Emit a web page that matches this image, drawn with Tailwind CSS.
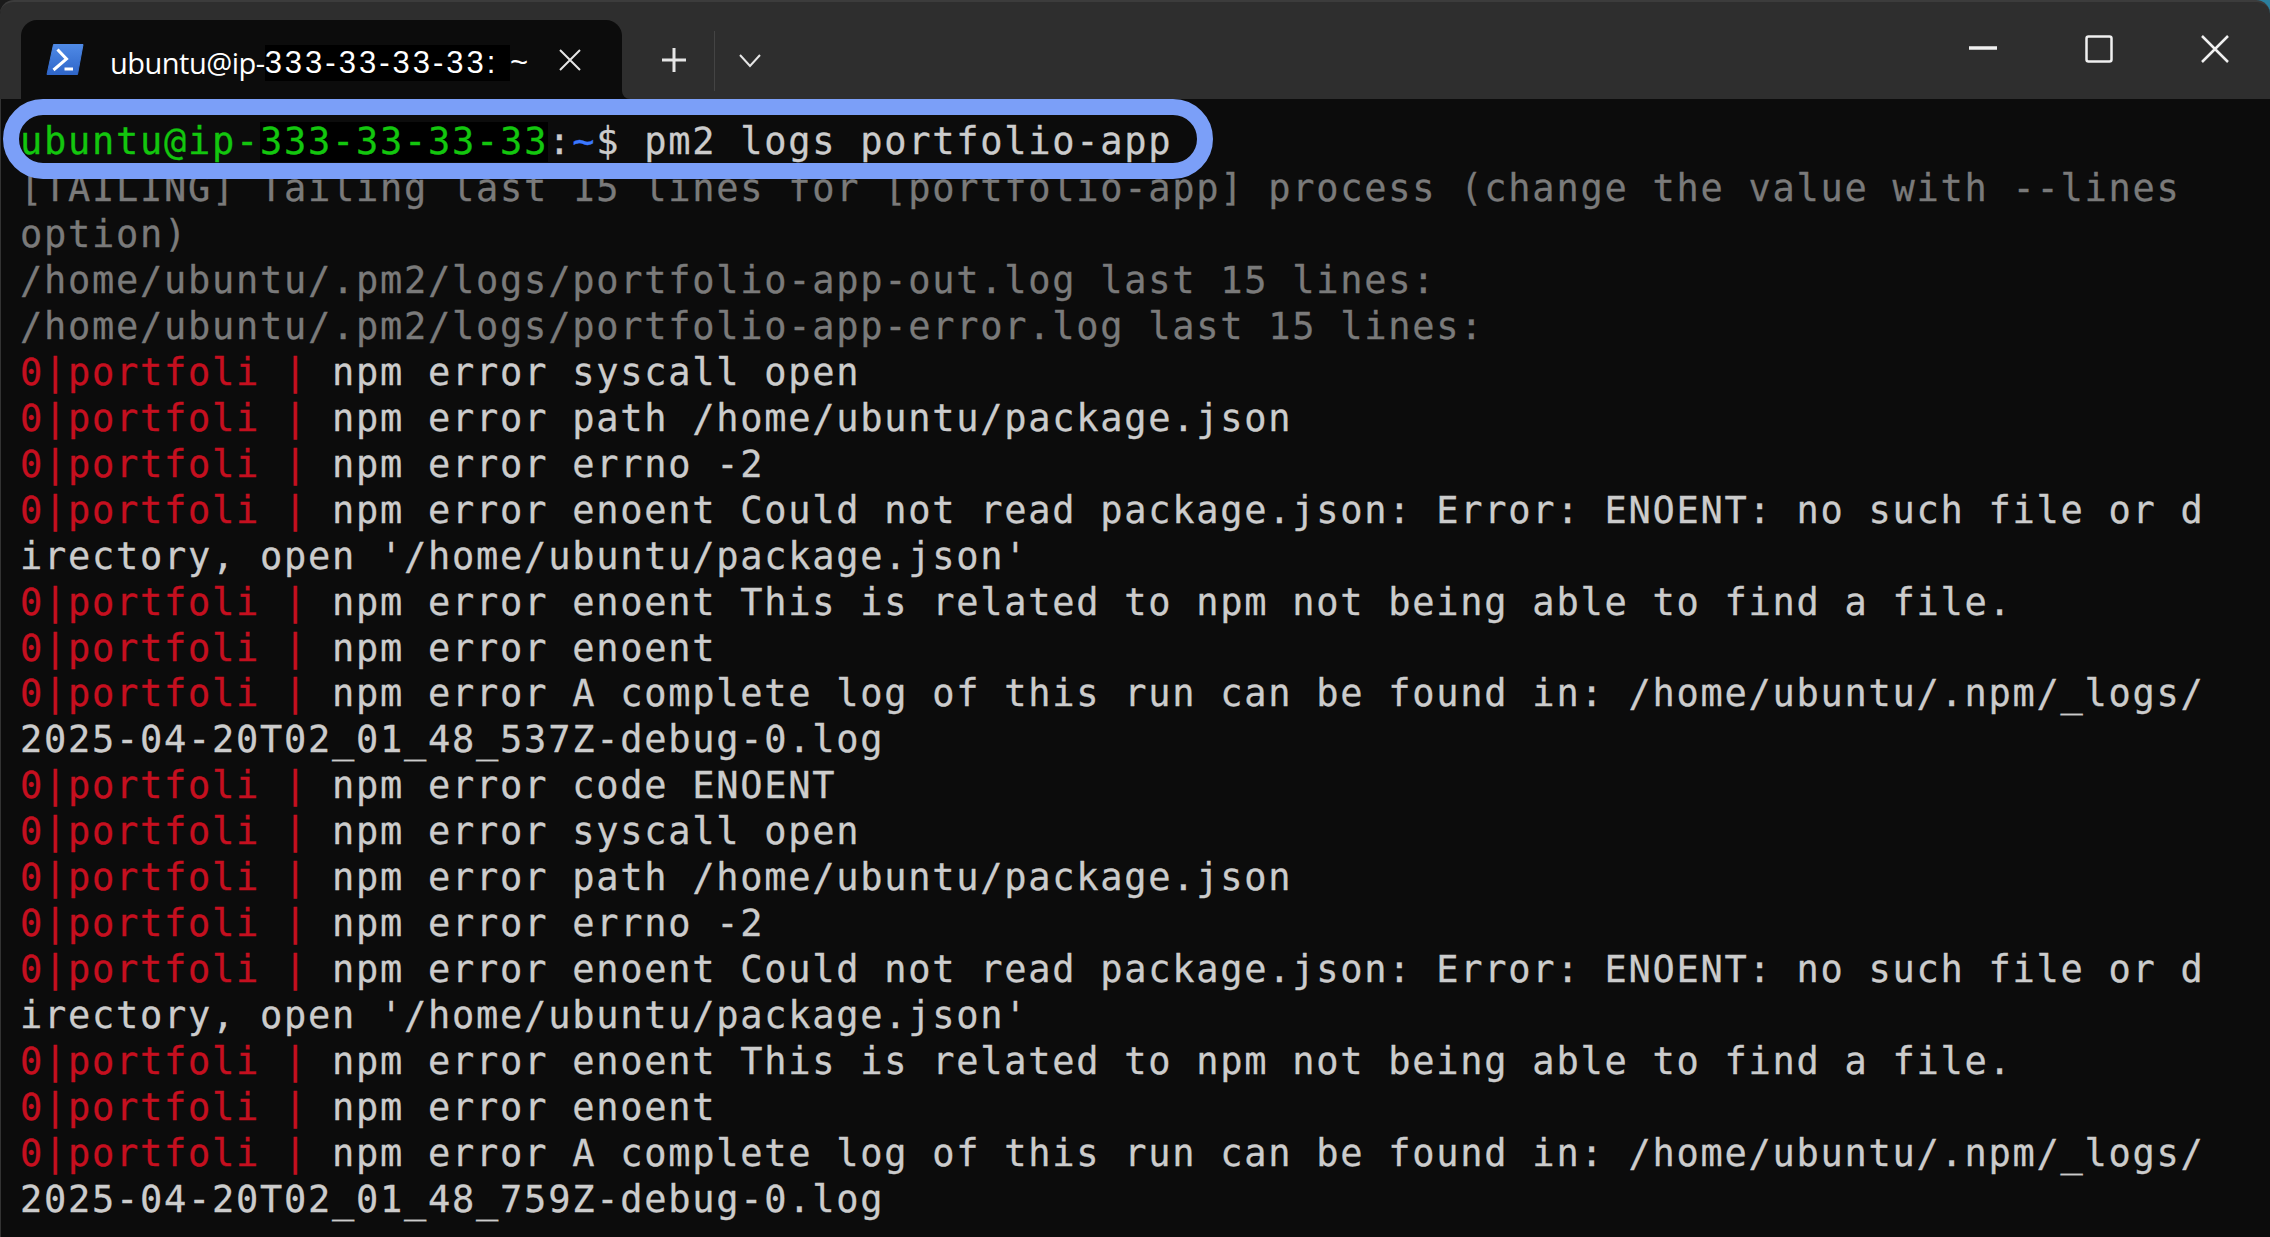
<!DOCTYPE html>
<html>
<head>
    <title>ubuntu@ip-333-33-33-33: ~</title>
    <script src="https://cdn.jsdelivr.net/npm/@tailwindcss/browser@4"></script>
</head>
<body class="bg-[#0c0c0c]">
    <div class="h-screen flex flex-col overflow-hidden bg-[linear-gradient(90deg,#1a1a1a_50%,#2a7f9e_50%)]">
        <!-- title bar -->
        <div class="h-[99px] flex bg-[#2e2e2e] rounded-t-[14px] border-t-2 border-[#3c3c3c] shrink-0">
            <div class="relative mt-[18px] ml-[21px] w-[601px] h-[79px] bg-[#0c0c0c] rounded-t-[16px] flex items-start shrink-0">
                <svg class="w-[38px] h-[31px] mt-[24px] ml-[25px]" viewBox="0 0 38 31">
                    <defs>
                        <linearGradient id="ps" x1="0" y1="0" x2="0" y2="1">
                            <stop offset="0" stop-color="#4f8ae6"/>
                            <stop offset="1" stop-color="#2f66c9"/>
                        </linearGradient>
                    </defs>
                    <path d="M7.5 0.5H37L31.5 30.5H1Z" fill="url(#ps)" stroke="url(#ps)" stroke-linejoin="round" stroke-width="1"/>
                    <path d="M11.5 5.5L20.5 15L7.5 26" fill="none" stroke="#fff" stroke-width="3"/>
                    <path d="M18.5 25H27" stroke="#fff" stroke-width="3"/>
                </svg>
                <div class="ml-[26px] mt-[25px] h-[36px] w-[415px] shrink-0 flex items-center text-white text-[29px] tracking-[-0.5px] whitespace-pre font-['Open_Sans',sans-serif]">ubuntu@ip-<span class="bg-black h-[36px] leading-[36px] w-[245px] text-[31px] tracking-[3px] font-['Liberation_Sans',sans-serif]">333-33-33-33: ~</span></div>
                <svg class="w-[22px] h-[22px] mt-[29px] ml-[34px]" viewBox="0 0 22 22" fill="none" stroke="#e6e6e6" stroke-width="2"><path d="M1 1L21 21M21 1L1 21"/></svg>
                <!-- small flare where the tab meets the terminal -->
                <svg class="absolute left-full bottom-0 w-[8px] h-[8px]" viewBox="0 0 8 8"><path d="M0 0A8 8 0 0 0 8 8H0Z" fill="#0c0c0c"/></svg>
            </div>
            <svg class="w-[26px] h-[26px] mt-[45px] ml-[39px] shrink-0" viewBox="0 0 26 26" fill="none" stroke="#e6e6e6" stroke-width="3"><path d="M13 1V25M1 13H25"/></svg>
            <div class="w-px h-[60px] mt-[29px] ml-[27px] bg-[#444444] shrink-0"></div>
            <svg class="w-[22px] h-[14px] mt-[52px] ml-[24px] shrink-0" viewBox="0 0 22 14" fill="none" stroke="#e6e6e6" stroke-width="2"><path d="M1 1L11 12L21 1"/></svg>
            <div class="flex-1"></div>
            <svg class="w-[28px] h-[4px] mt-[44px] shrink-0" viewBox="0 0 28 4"><path d="M0 2H28" stroke="#f0f0f0" stroke-width="3.5" stroke-linecap="round"/></svg>
            <svg class="w-[28px] h-[28px] mt-[33px] ml-[88px] shrink-0" viewBox="0 0 28 28" fill="none"><rect x="1.5" y="1.5" width="25" height="25" rx="2" stroke="#f0f0f0" stroke-width="2.5"/></svg>
            <svg class="w-[28px] h-[28px] mt-[33px] ml-[88px] mr-[41px] shrink-0" viewBox="0 0 28 28" fill="none" stroke="#f0f0f0" stroke-width="2.5"><path d="M1 1L27 27M27 1L1 27"/></svg>
        </div>

        <!-- terminal -->
        <div class="relative flex-1 flex flex-col bg-[#0c0c0c] border-l border-[#333333] pl-[19px] pt-[20px] text-[#cccccc] text-[37px] leading-[45.95px] tracking-[1.73px] whitespace-pre [-webkit-text-stroke:0.3px] font-['DejaVu_Sans_Mono',monospace]">
            <div class="h-[47px] text-[#13c60e]">ubuntu@ip-<span class="inline-block h-[40px] leading-[40px] bg-black">333-33-33-33</span><span class="text-[#cccccc]">:</span><span class="text-[#3b78ff]">~</span><span class="text-[#cccccc]">$ pm2 logs portfolio-app</span></div>
            <div class="text-[#7a7a7a]">[TAILING] Tailing last 15 lines for [portfolio-app] process (change the value with --lines</div>
            <div class="text-[#7a7a7a]">option)</div>
            <div class="text-[#7a7a7a]">/home/ubuntu/.pm2/logs/portfolio-app-out.log last 15 lines:</div>
            <div class="text-[#7a7a7a]">/home/ubuntu/.pm2/logs/portfolio-app-error.log last 15 lines:</div>
            <div><span class="text-[#c50f1f]">0|portfoli | </span>npm error syscall open</div>
            <div><span class="text-[#c50f1f]">0|portfoli | </span>npm error path /home/ubuntu/package.json</div>
            <div><span class="text-[#c50f1f]">0|portfoli | </span>npm error errno -2</div>
            <div><span class="text-[#c50f1f]">0|portfoli | </span>npm error enoent Could not read package.json: Error: ENOENT: no such file or d</div>
            <div>irectory, open '/home/ubuntu/package.json'</div>
            <div><span class="text-[#c50f1f]">0|portfoli | </span>npm error enoent This is related to npm not being able to find a file.</div>
            <div><span class="text-[#c50f1f]">0|portfoli | </span>npm error enoent</div>
            <div><span class="text-[#c50f1f]">0|portfoli | </span>npm error A complete log of this run can be found in: /home/ubuntu/.npm/_logs/</div>
            <div>2025-04-20T02_01_48_537Z-debug-0.log</div>
            <div><span class="text-[#c50f1f]">0|portfoli | </span>npm error code ENOENT</div>
            <div><span class="text-[#c50f1f]">0|portfoli | </span>npm error syscall open</div>
            <div><span class="text-[#c50f1f]">0|portfoli | </span>npm error path /home/ubuntu/package.json</div>
            <div><span class="text-[#c50f1f]">0|portfoli | </span>npm error errno -2</div>
            <div><span class="text-[#c50f1f]">0|portfoli | </span>npm error enoent Could not read package.json: Error: ENOENT: no such file or d</div>
            <div>irectory, open '/home/ubuntu/package.json'</div>
            <div><span class="text-[#c50f1f]">0|portfoli | </span>npm error enoent This is related to npm not being able to find a file.</div>
            <div><span class="text-[#c50f1f]">0|portfoli | </span>npm error enoent</div>
            <div><span class="text-[#c50f1f]">0|portfoli | </span>npm error A complete log of this run can be found in: /home/ubuntu/.npm/_logs/</div>
            <div>2025-04-20T02_01_48_759Z-debug-0.log</div>

            <!-- annotation drawn over the terminal -->
            <div class="absolute left-[2px] top-0 w-[1210px] h-[80px] border-[16px] border-[#7b9ff8] rounded-[40px]"></div>
        </div>
    </div>
</body>
</html>
